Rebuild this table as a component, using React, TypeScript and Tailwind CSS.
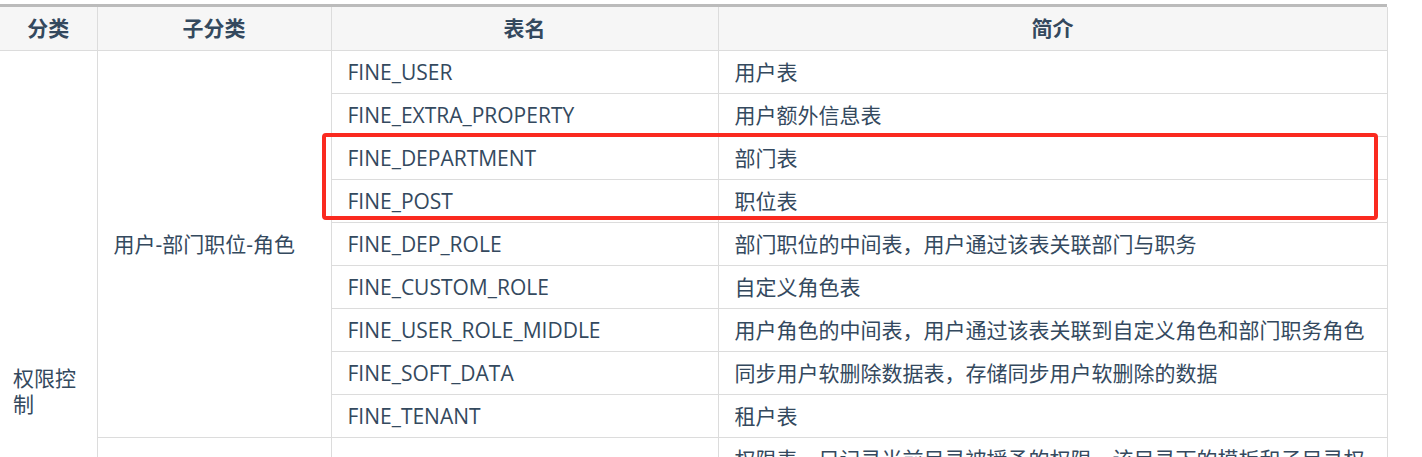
const groups = [
  {
    name: '用户-部门职位-角色',
    rows: [
      ['FINE_USER', '用户表'],
      ['FINE_EXTRA_PROPERTY', '用户额外信息表'],
      ['FINE_DEPARTMENT', '部门表'],
      ['FINE_POST', '职位表'],
      ['FINE_DEP_ROLE', '部门职位的中间表，用户通过该表关联部门与职务'],
      ['FINE_CUSTOM_ROLE', '自定义角色表'],
      ['FINE_USER_ROLE_MIDDLE', '用户角色的中间表，用户通过该表关联到自定义角色和部门职务角色'],
      ['FINE_SOFT_DATA', '同步用户软删除数据表，存储同步用户软删除的数据'],
      ['FINE_TENANT', '租户表'],
    ],
  },
  {
    name: '权限',
    rows: [
      ['FINE_AUTHORITY', '权限表，只记录当前目录被授予的权限，该目录下的模板和子目录权限继承自该目录'],
      ['FINE_AUTHORITY_OBJECT', '权限实体表'],
      ['FINE_AUTH_PREFERENCE', '权限偏好设置表'],
      ['FINE_AUTH_DETAIL', '权限明细表'],
      ['FINE_AUTH_EXTRA', '权限扩展表'],
      ['FINE_AUTH_LOG', '权限变更记录表'],
    ],
  },
]

const total = groups.reduce((n, g) => n + g.rows.length, 0)

const cell = 'border border-[#dcdcdc] px-[16px] py-[8px] align-middle'

export default function App() {
  return (
    <div
      className="h-[457px] w-[1422px] overflow-hidden bg-white pt-[4px] text-[21px] leading-[26px] text-[#34495e]"
      style={{ fontFamily: '"Open Sans", "Noto Sans CJK SC", sans-serif' }}
    >
      <div className="relative w-[1387px]">
        <div className="h-[3px] w-[1387px] bg-[#bbbbbb]" />
        <table className="w-[1387px] table-fixed border-collapse">
          <colgroup>
            <col className="w-[97px]" />
            <col className="w-[234px]" />
            <col className="w-[387px]" />
            <col className="w-[669px]" />
          </colgroup>
          <thead>
            <tr className="bg-[#f6f6f6]">
              {['分类', '子分类', '表名', '简介'].map((h, i) => (
                <th
                  key={h}
                  className={`h-[43px] border-x border-b border-[#dcdcdc] px-[16px] text-center font-bold ${i === 0 ? 'border-l-0' : ''}`}
                >
                  {h}
                </th>
              ))}
            </tr>
          </thead>
          <tbody>
            {groups.map((g, gi) =>
              g.rows.map(([table, desc], ri) => (
                <tr key={table} className={gi === 1 && ri === g.rows.length - 1 ? 'h-[54px]' : ''}>
                  {gi === 0 && ri === 0 && (
                    <td rowSpan={total} className={`${cell} border-l-0 pl-[13px] pr-[13px]`}>
                      权限控制
                    </td>
                  )}
                  {ri === 0 && (
                    <td rowSpan={g.rows.length} className={cell}>
                      {g.name}
                    </td>
                  )}
                  <td className={cell}>{table}</td>
                  <td className={cell}>{desc}</td>
                </tr>
              )),
            )}
          </tbody>
        </table>
        <div className="absolute left-[322px] top-[129px] h-[87px] w-[1056px] rounded-[4px] border-[4px] border-[#fa2a20]" />
      </div>
    </div>
  )
}
